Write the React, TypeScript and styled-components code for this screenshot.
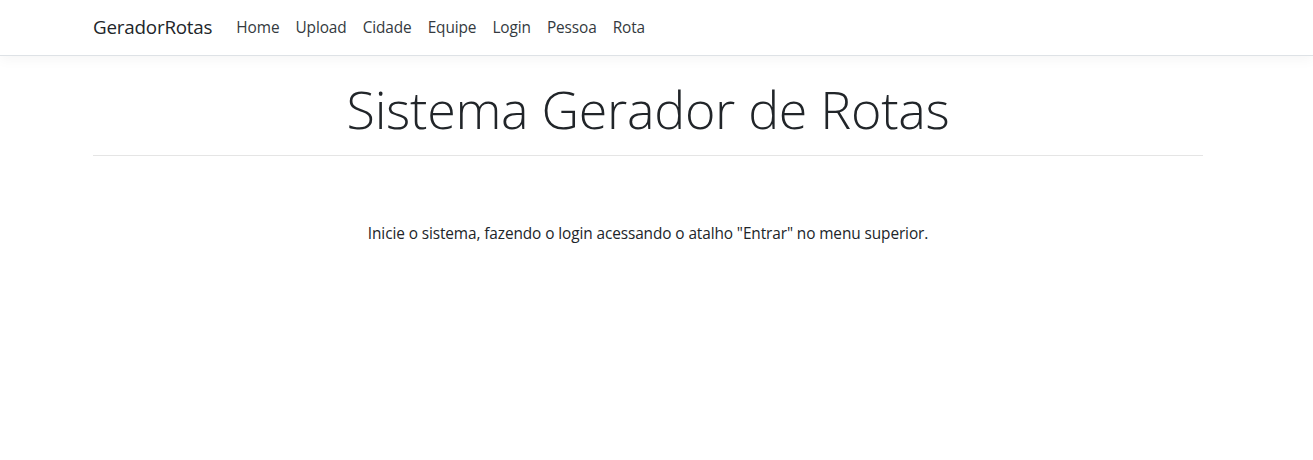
import React from "react";
import styled, { createGlobalStyle } from "styled-components";

const Global = createGlobalStyle`
  html, body { margin: 0; padding: 0; background: #fff; }
  body {
    font-family: "Open Sans", "Noto Sans", sans-serif;
    color: #212529;
    font-size: 15px;
    line-height: 1.5;
  }
`;

const Frame = styled.div`
  width: calc(100% - 17px);
`;

const NavBar = styled.nav`
  border-bottom: 1px solid #dee2e6;
  box-shadow: 0 4px 12px rgba(0, 0, 0, 0.04);
  background: #fff;
  margin-bottom: 16px;
`;

const Container = styled.div`
  max-width: 1110px;
  margin: 0 auto;
  padding: 0 15px;
`;

const NavInner = styled(Container)`
  display: flex;
  align-items: center;
  height: 55px;
`;

const Brand = styled.a`
  font-size: 18.8px;
  color: #212529;
  margin-right: 16px;
  text-decoration: none;
  letter-spacing: -0.2px;
`;

const NavList = styled.ul`
  display: flex;
  list-style: none;
  margin: 0;
  padding: 0;
`;

const NavLink = styled.a`
  display: block;
  padding: 8px;
  font-size: 15.4px;
  color: #343a40;
  text-decoration: none;
  letter-spacing: -0.1px;
`;

const Title = styled.h1`
  font-weight: 300;
  font-size: 52px;
  line-height: 1.2;
  text-align: center;
  margin: 0;
  padding-top: 6px;
  color: #212529;
  letter-spacing: -0.3px;
`;

const Rule = styled.hr`
  border: 0;
  border-top: 1px solid #e5e5e5;
  margin: 15px 0 0;
`;

const Lead = styled.p`
  text-align: center;
  margin: 66px 0 0;
  font-size: 15.4px;
  letter-spacing: -0.1px;
`;

const links = ["Home", "Upload", "Cidade", "Equipe", "Login", "Pessoa", "Rota"];

export default function App() {
  return (
    <>
      <Global />
      <NavBar>
        <Frame>
          <NavInner>
            <Brand href="#">GeradorRotas</Brand>
            <NavList>
              {links.map((l) => (
                <li key={l}>
                  <NavLink href="#">{l}</NavLink>
                </li>
              ))}
            </NavList>
          </NavInner>
        </Frame>
      </NavBar>
      <Frame>
        <Container>
          <Title>Sistema Gerador de Rotas</Title>
          <Rule />
          <Lead>
            Inicie o sistema, fazendo o login acessando o atalho "Entrar" no menu superior.
          </Lead>
        </Container>
      </Frame>
    </>
  );
}
